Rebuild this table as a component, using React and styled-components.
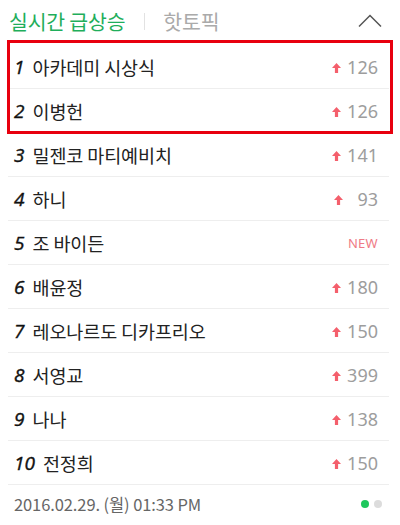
import React from "react";
import styled, { createGlobalStyle } from "styled-components";

const Global = createGlobalStyle`
  html, body { margin: 0; padding: 0; background: #fff; }
  body { font-family: "Noto Sans CJK KR", "Noto Sans", sans-serif; color: #222; }
`;

const Page = styled.div`
  width: 400px;
  height: 525px;
  display: flex;
  flex-direction: column;
  overflow: hidden;
`;

const Header = styled.div`
  height: 45px;
  box-sizing: border-box;
  padding: 0 18px 3px 9px;
  display: flex;
  align-items: center;
`;

const Tab = styled.span`
  font-size: 20.5px;
  letter-spacing: -0.2px;
  color: ${(p) => (p.$active ? "#1fae5b" : "#aaa")};
`;

const Divider = styled.span`
  width: 1px;
  height: 17px;
  background: #e2e2e2;
  margin: 0 18px 0 19px;
`;

const Toggle = styled.svg`
  margin-left: auto;
  display: block;
`;

const List = styled.ul`
  position: relative;
  list-style: none;
  margin: 0 11px 0 8px;
  padding: 0;
`;

const Highlight = styled.div`
  position: absolute;
  top: -5px;
  left: -1px;
  width: 386px;
  height: 94px;
  box-sizing: border-box;
  border: 3px solid #e8000e;
  pointer-events: none;
`;

const Row = styled.li`
  height: 44px;
  box-sizing: border-box;
  border-bottom: 1px solid #eee;
  display: flex;
  align-items: center;
  padding: 0 11px 0 6px;
`;

const Rank = styled.span`
  font-family: "Open Sans", "Noto Sans", sans-serif;
  font-style: italic;
  font-weight: 400;
  font-size: 19px;
  color: #111;
  -webkit-text-stroke: 0.4px #111;
  margin-right: 8px;
`;

const Keyword = styled.span`
  font-size: 18.5px;
  color: #222;
  letter-spacing: -0.1px;
`;

const Change = styled.span`
  margin-left: auto;
  display: flex;
  align-items: center;
`;

const Arrow = styled.svg`
  display: block;
  margin: 3px 6px 0 0;
`;

const Count = styled.span`
  min-width: 29px;
  text-align: right;
  font-family: "Noto Sans", sans-serif;
  font-size: 18px;
  color: #9d9d9d;
`;

const New = styled.span`
  font-family: "Noto Sans", sans-serif;
  font-size: 13px;
  color: #ef7b86;
  letter-spacing: 0.3px;
`;

const Footer = styled.div`
  flex: 1;
  display: flex;
  align-items: center;
  padding: 0 18px 2px 14px;
`;

const Stamp = styled.span`
  font-size: 16.5px;
  color: #666;
  letter-spacing: -0.1px;
`;

const Dots = styled.span`
  margin-left: auto;
  display: flex;
  gap: 5px;
`;

const Dot = styled.span`
  width: 8px;
  height: 8px;
  border-radius: 50%;
  background: ${(p) => (p.$on ? "#1ec75c" : "#dcdcdc")};
`;

const items = [
  ["아카데미 시상식", 126],
  ["이병헌", 126],
  ["밀젠코 마티예비치", 141],
  ["하니", 93],
  ["조 바이든", null],
  ["배윤정", 180],
  ["레오나르도 디카프리오", 150],
  ["서영교", 399],
  ["나나", 138],
  ["전정희", 150],
];

const UpArrow = () => (
  <Arrow width="9" height="10" viewBox="0 0 9 10">
    <path d="M4.5 0 L9 5 L6.1 5 L6.1 10 L2.9 10 L2.9 5 L0 5 Z" fill="#f45f6c" />
  </Arrow>
);

export default function App() {
  return (
    <Page>
      <Global />
      <Header>
        <Tab $active>실시간 급상승</Tab>
        <Divider />
        <Tab>핫토픽</Tab>
        <Toggle width="24" height="14" viewBox="0 0 24 14">
          <polyline points="1,12.5 12,1.5 23,12.5" fill="none" stroke="#555" strokeWidth="1.5" />
        </Toggle>
      </Header>
      <List>
        {items.map(([word, n], i) => (
          <Row key={i}>
            <Rank>{i + 1}</Rank>
            <Keyword>{word}</Keyword>
            {n === null ? (
              <Change>
                <New>NEW</New>
              </Change>
            ) : (
              <Change>
                <UpArrow />
                <Count>{n}</Count>
              </Change>
            )}
          </Row>
        ))}
        <Highlight />
      </List>
      <Footer>
        <Stamp>2016.02.29. (월) 01:33 PM</Stamp>
        <Dots>
          <Dot $on />
          <Dot />
        </Dots>
      </Footer>
    </Page>
  );
}
